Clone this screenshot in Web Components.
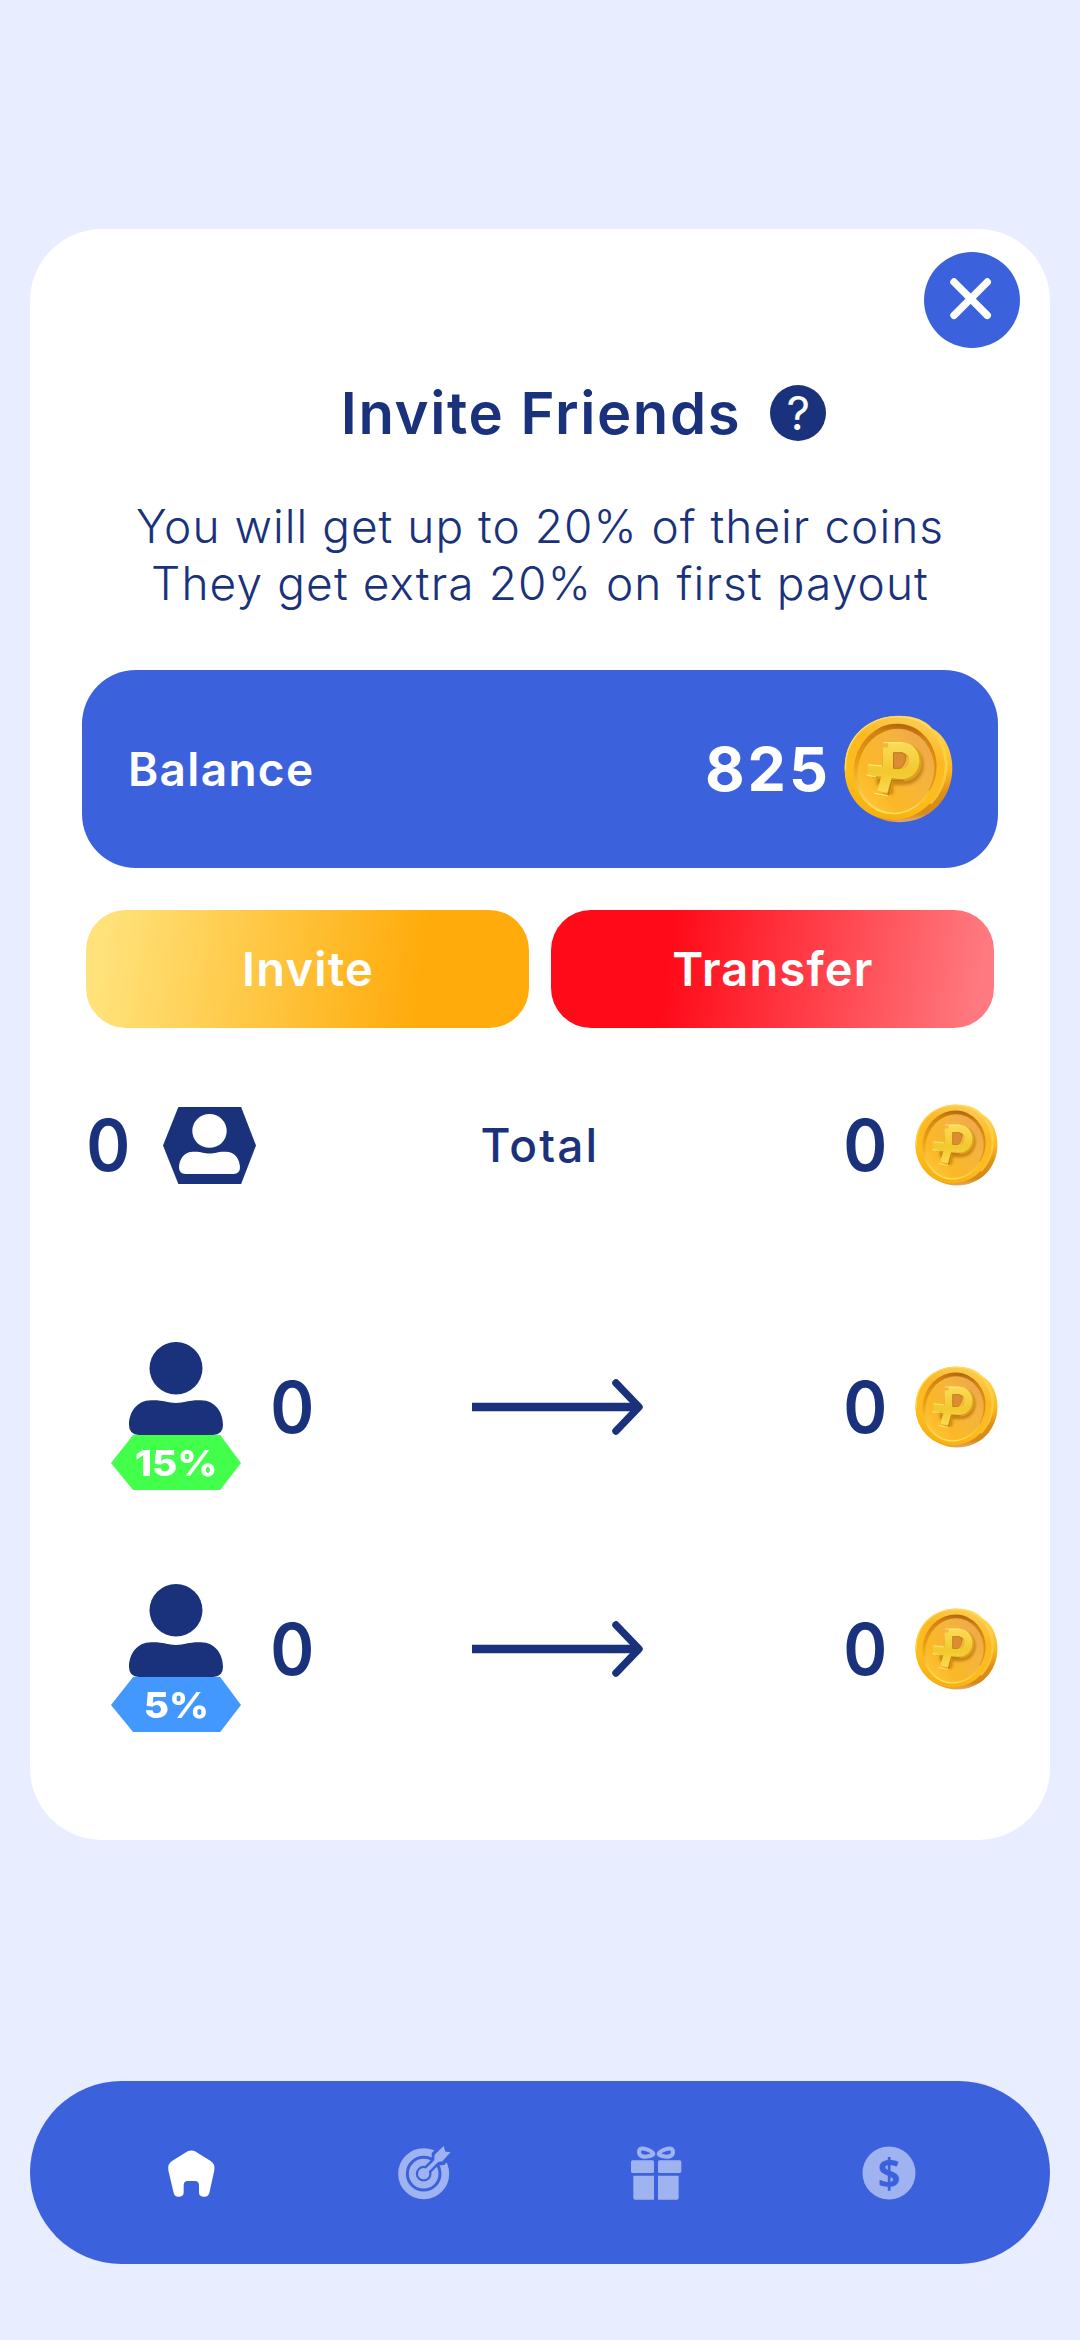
<!DOCTYPE html>
<html lang="en">
<head>
<meta charset="utf-8">
<title>Invite Friends</title>
<style>
html,body{margin:0;padding:0}
body{width:1080px;height:2340px;background:#e8eeff;font-family:Inter,"Noto Sans",sans-serif;color:#1a327b;overflow:hidden}
</style>
</head>
<body>
<invite-screen></invite-screen>
<script>
const define = (name, markup) => {
  customElements.define(name, class extends HTMLElement {
    constructor() {
      super();
      this.attachShadow({ mode: 'open' });
    }
    connectedCallback() {
      this.shadowRoot.innerHTML = typeof markup === 'function' ? markup(this) : markup;
    }
  });
};

/* Gold coin with a raised emblem */
define('gold-coin', `
<style>:host{display:block;flex:none}svg{display:block;width:100%;height:100%}</style>
<svg viewBox="70 46 328 324">
  <defs>
    <linearGradient id="edge" x1=".6" y1="0" x2=".72" y2="1">
      <stop offset="0" stop-color="#ffd95c"/><stop offset=".3" stop-color="#ffcb3c"/>
      <stop offset=".55" stop-color="#fbb81e"/><stop offset=".76" stop-color="#dd8e14"/><stop offset=".92" stop-color="#d68a1c"/><stop offset="1" stop-color="#f0b890"/>
    </linearGradient>
    <linearGradient id="rim" x1="0" y1="0" x2="0" y2="1">
      <stop offset="0" stop-color="#fccb50"/><stop offset=".3" stop-color="#fcb824"/>
      <stop offset=".7" stop-color="#fdbd1c"/><stop offset="1" stop-color="#f7b010"/>
    </linearGradient>
    <linearGradient id="recess" x1=".4" y1="0" x2=".5" y2="1">
      <stop offset="0" stop-color="#b0640c"/><stop offset=".12" stop-color="#cf8010"/>
      <stop offset=".5" stop-color="#eca016"/><stop offset="1" stop-color="#ffe060"/>
    </linearGradient>
    <linearGradient id="face" x1=".85" y1="0" x2=".2" y2="1">
      <stop offset="0" stop-color="#eda550"/><stop offset=".35" stop-color="#f5b43c"/>
      <stop offset=".75" stop-color="#fbb826"/><stop offset="1" stop-color="#ffc63a"/>
    </linearGradient>
    <linearGradient id="mark" gradientUnits="userSpaceOnUse" x1="0" y1="128" x2="0" y2="285">
      <stop offset="0" stop-color="#fbdc58"/><stop offset=".55" stop-color="#f2c82e"/><stop offset="1" stop-color="#fbdc50"/>
    </linearGradient>
    <filter id="soft" x="-20%" y="-20%" width="140%" height="140%"><feGaussianBlur stdDeviation="5"/></filter>
  </defs>
  <path fill="url(#edge)" d="M234 48C284 48 314 62 336 86C376 108 396 156 396 206C396 296 330 368 236 368C140 366 72 290 72 204C72 112 144 48 234 48Z"/>
  <path fill="none" stroke="#ffd548" stroke-width="9" opacity=".7" d="M352 110C390 172 386 250 330 312"/>
  <ellipse cx="222" cy="205" rx="149" ry="157" transform="rotate(20 222 205)" fill="url(#rim)"/>
  <path fill="none" stroke="#ffdc60" stroke-width="4" opacity=".9" d="M75 212C70 110 150 50 232 51C280 52 312 66 332 88"/>
  <ellipse cx="224" cy="208" rx="124" ry="137" transform="rotate(14 224 208)" fill="url(#recess)"/>
  <ellipse cx="226" cy="213" rx="114" ry="127" transform="rotate(14 226 213)" fill="url(#face)"/>
  <path fill="none" stroke="#cf8418" stroke-width="3" opacity=".8" d="M306 108C352 146 358 214 326 272"/>
  <g fill="none" stroke-linejoin="round">
    <path d="M214 154H260C310 158 308 242 250 242H168M204 164V284" stroke="#9a5206" stroke-width="28" opacity=".5" filter="url(#soft)"/>
    <g stroke="#dca11a" stroke-width="30">
      <path d="M208 148H256C306 154 300 234 244 230L156 220M208 150V216L196 276"/>
    </g>
    <g stroke="url(#mark)" stroke-width="31">
      <path d="M203 143H246C294 147 294 223 242 223L142 211M203 143V214L185 277"/>
    </g>
    <path d="M188 129H246M142 195L184 199M138 226L166 232M162 281L202 289" stroke="#fff08a" stroke-width="3"/>
    <path d="M219 206V159H246C262 168 256 192 240 206H219Z" fill="#dc8c34" stroke="#b87408" stroke-width="2.500"/>
    <path d="M214 242L203 287M214 242H250" stroke="#b87408" stroke-width="3"/>
  </g>
</svg>`);

/* Head and shoulders, coloured by currentColor */
define('person-icon', `
<style>:host{display:block;flex:none}svg{display:block;width:100%;height:100%}</style>
<svg viewBox="0 0 94 94" preserveAspectRatio="none" fill="currentColor">
  <circle cx="47" cy="26.500" r="26.500"/>
  <path d="M22 59C34 58.500 38 61.700 47 61.700S60 58.500 72 59C86 59 94 71 94 84Q94 94 84 94H10Q0 94 0 84C0 71 8 59 22 59Z"/>
</svg>`);

define('close-button', `
<style>:host{display:block;width:96px;height:96px;border-radius:50%;background:#3c61dd}svg{display:block}</style>
<svg viewBox="0 0 96 96" width="96" height="96"><path d="M30 30L63.300 63.300M63.300 30L30 63.300" stroke="#fff" stroke-width="7.400" stroke-linecap="round"/></svg>`);

define('help-badge', `
<style>:host{display:block;width:56px;height:56px;border-radius:50%;background:#1a327b;color:#fff;font:400 46px/57px Inter,sans-serif;text-align:center}</style>?`);

define('balance-panel', `
<style>
:host{display:flex;align-items:center;height:198px;border-radius:54px;background:#3c61dd;color:#fff;padding:0 45px 0 46px;box-sizing:border-box}
.label{flex:1;font-weight:600;font-size:46px;letter-spacing:1.300px}
.sum{font-weight:700;font-size:61px;letter-spacing:3px;margin-right:13px}
gold-coin{width:109px;height:108px}
</style>
<span class="label">Balance</span><span class="sum"><slot></slot></span><gold-coin></gold-coin>`);

define('action-button', el => `
<style>
:host{flex:1;display:flex;align-items:center;justify-content:center;height:118px;border-radius:40px;color:#fff;font-weight:600;font-size:47px;letter-spacing:1.200px;box-sizing:border-box;padding-bottom:1px;padding-left:1px;
background:${el.getAttribute('kind') === 'gold'
  ? 'linear-gradient(98deg,#ffe27a 5%,#ffab0b 75%)'
  : 'linear-gradient(98deg,#ff0a18 27%,#ff7a80 96%)'}}
</style><slot></slot>`);

define('count-value', `
<style>:host{display:block;font-weight:600;font-size:71px;line-height:82px;width:44px;text-align:center}span{display:block;transform:scaleX(.94)}</style><span><slot></slot></span>`);

define('coin-total', `
<style>:host{display:flex;align-items:center;gap:29px;justify-content:flex-end}gold-coin{width:83px;height:82px}</style>
<count-value><slot></slot></count-value><gold-coin></gold-coin>`);

define('hex-friends', `
<style>
:host{display:flex;width:93px;height:77px;margin-top:1px;background:#1a327b;color:#fff;clip-path:polygon(16.500% 0,84% 0,100% 50%,84% 100%,16.500% 100%,0 50%);justify-content:center;box-sizing:border-box;padding-top:7px}
person-icon{width:61px;height:60px}
</style><person-icon></person-icon>`);

define('total-row', `
<style>
:host{display:grid;grid-template-columns:1fr auto 1fr;align-items:center;height:82px}
.left{display:flex;align-items:center;gap:34px;padding-left:3px}
.name{font-weight:500;font-size:46px;letter-spacing:2.200px}
</style>
<div class="left"><count-value>0</count-value><hex-friends></hex-friends></div>
<span class="name">Total</span>
<coin-total>0</coin-total>`);

define('level-person', el => `
<style>
:host{display:flex;flex-direction:column;align-items:center;width:130px;padding-top:1px}
person-icon{width:94px;height:93px}
.badge{width:130px;height:55px;display:flex;align-items:center;justify-content:center;background:${el.getAttribute('tint')};clip-path:polygon(17% 0,84% 0,100% 51%,84% 100%,17% 100%,0 51%);color:#fff;font-weight:800;font-size:35px}
.badge span{transform:scaleX(1.110)}
</style>
<person-icon></person-icon><div class="badge"><span>${el.getAttribute('percent')}</span></div>`);

define('level-row', el => `
<style>
:host{display:grid;grid-template-columns:390px 171px 1fr;height:149px}
.left{display:flex;padding-left:29px;gap:28px}
.mid{height:132px;display:flex;align-items:center}
svg{display:block}
</style>
<div class="left"><level-person percent="${el.getAttribute('percent')}" tint="${el.getAttribute('tint')}"></level-person><div class="mid"><count-value>0</count-value></div></div>
<div class="mid"><svg width="171" height="64" viewBox="0 0 171 64" fill="none" stroke="#1a327b" stroke-width="8.500"><path d="M0 32H166"/><path d="M144 8L167 32L144 56" stroke-linecap="round" stroke-linejoin="round" stroke-width="7.500"/></svg></div>
<coin-total class="mid">0</coin-total>`);

define('invite-card', `
<style>
:host{display:flex;flex-direction:column;height:1611px;border-radius:72px;background:#fff;box-sizing:border-box;padding:23px 52px 0}
header{display:flex;justify-content:flex-end;margin-right:-22px}
.title{display:grid;grid-template-columns:1fr auto 1fr;align-items:center;height:56px;margin-top:37px}
h1{grid-column:2;margin:0 -2px 0 0;font-weight:600;font-size:58px;line-height:56px;letter-spacing:1.600px}
help-badge{margin-left:31px}
p{margin:57px 0 0;text-align:center;font-weight:300;font-size:46px;line-height:57px;letter-spacing:1.020px}
p span{letter-spacing:1.120px}
balance-panel{margin-top:58px}
.actions{display:flex;gap:22px;margin:42px 4px 0}
total-row{margin-top:76px}
.l1{margin-top:155px}.l2{margin-top:93px}
</style>
<header><close-button></close-button></header>
<div class="title"><h1>Invite Friends</h1><help-badge></help-badge></div>
<p>You will get up to 20% of their coins<br><span>They get extra 20% on first payout</span></p>
<balance-panel>825</balance-panel>
<div class="actions"><action-button kind="gold">Invite</action-button><action-button kind="red">Transfer</action-button></div>
<total-row></total-row>
<level-row class="l1" percent="15%" tint="#42ff4b"></level-row>
<level-row class="l2" percent="5%" tint="#4298ff"></level-row>`);

define('nav-bar', `
<style>
:host{display:flex;align-items:center;justify-content:space-between;height:183px;border-radius:92px;background:#3c61dd;box-sizing:border-box;padding:0 134px 0 134px}
svg{display:block;width:54px;height:56px;overflow:visible}
</style>
<svg viewBox="72 76 162 168"><path fill="#fff" d="M143 95Q154 90 165 95L212 124Q226 133 223 152L208 220Q205 231 194 231H190Q177 231 177 218V197Q177 184 164 184H144Q131 184 131 197V218Q131 231 118 231H114Q104 231 101 220L85 152Q82 133 96 124Z"/></svg>
<svg viewBox="770 76 162 168" fill="none" stroke="#a0b3f1">
  <circle cx="850" cy="162" r="65" stroke-width="23"/><circle cx="850" cy="162" r="34" stroke-width="21"/>
  <path d="M850 162L892 120" stroke="#3c61dd" stroke-width="27"/>
  <path d="M874 130V100L908 66L940 104L912 136L882 138Z" fill="#3c61dd" stroke="none"/>
  <circle cx="850" cy="162" r="17" fill="#a0b3f1" stroke="none"/>
  <path d="M850 162L902 110" stroke-width="12"/>
  <path fill="#a0b3f1" stroke="none" d="M881 129L883 105L910 79L915 96L931 97L906 125Z"/>
</svg>
<svg viewBox="84 76 162 168" fill="#a0b3f1">
  <rect x="90" y="122" width="69" height="38" rx="5"/><rect x="171" y="122" width="70" height="38" rx="5"/>
  <path d="M97 168H159V240H103Q97 240 97 234ZM171 168H233V234Q233 240 227 240H171Z"/>
  <g fill="none" stroke="#a0b3f1" stroke-width="12"><path d="M114 97C114 84 128 84 144 92C164 102 158 106 146 109C128 114 114 110 114 97Z"/><path d="M216 97C216 84 202 84 186 92C166 102 172 106 184 109C202 114 216 110 216 97Z"/></g>
</svg>
<svg viewBox="786 76 162 168"><circle cx="867" cy="160" r="79.500" fill="#a0b3f1"/><text x="0" y="0" transform="translate(867 204) scale(.94 1)" text-anchor="middle" font-family="Open Sans,sans-serif" font-weight="700" font-size="126" fill="#3c61dd">$</text></svg>`);

define('invite-screen', `
<style>
:host{display:flex;flex-direction:column;height:2340px;box-sizing:border-box;padding:229px 30px 76px;justify-content:space-between}
</style>
<invite-card></invite-card><nav-bar></nav-bar>`);
</script>
</body>
</html>
